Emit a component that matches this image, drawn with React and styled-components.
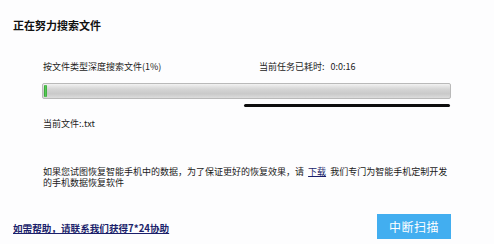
import React from "react";
import styled, { createGlobalStyle } from "styled-components";

const Global = createGlobalStyle`
  html, body { margin: 0; padding: 0; background: #fdfdfe; }
  body { font-family: "SimSun", "Noto Sans CJK SC", "Liberation Sans", sans-serif; color: #1a1a1a; }
`;

const Page = styled.div`
  width: 494px;
  height: 244px;
  box-sizing: border-box;
  display: flex;
  flex-direction: column;
  overflow: hidden;
`;

const Title = styled.h1`
  margin: 18px 0 0 13px;
  font-size: 11px;
  line-height: 14px;
  font-weight: 700;
  color: #111;
`;

const Body = styled.div`
  margin-left: 42px;
  width: 409px;
  display: flex;
  flex-direction: column;
`;

const InfoRow = styled.div`
  margin-top: 28px;
  display: flex;
  font-size: 9px;
  line-height: 14px;
  color: #222;
`;

const Label = styled.span`
  padding-left: 1px;
  width: 216px;
`;

const Elapsed = styled.span`
  display: flex;
  gap: 6px;
`;

const Track = styled.div`
  margin-top: 9px;
  height: 16px;
  box-sizing: border-box;
  border: 1px solid #b9b9b9;
  border-radius: 2px;
  background: linear-gradient(#f2f2f2 0%, #d6d6d6 35%, #c9c9c9 70%, #dcdcdc 100%);
  display: flex;
  padding: 1px;
`;

const Fill = styled.div`
  height: 100%;
  background: linear-gradient(90deg, #2f9a2f, #5fd35f 60%, #2f9a2f);
  border-radius: 1px;
`;

const Rule = styled.div`
  margin-top: 5px;
  margin-left: 202px;
  width: 206px;
  height: 3px;
  border-radius: 2px;
  background: #0d0d0d;
`;

const CurrentFile = styled.div`
  margin-top: 10px;
  font-size: 9px;
  line-height: 14px;
  color: #222;
  padding-left: 1px;
`;

const Notice = styled.p`
  margin: 35px 0 0 0;
  padding-left: 1px;
  font-size: 9px;
  line-height: 11px;
  color: #1a1a1a;
`;

const InlineLink = styled.a`
  color: #1b1f6b;
  text-decoration: underline;
`;

const Footer = styled.div`
  margin-top: 26px;
  padding: 0 43px 0 13px;
  display: flex;
  align-items: center;
  justify-content: space-between;
`;

const HelpLink = styled.a`
  font-size: 9.6px;
  font-weight: 700;
  line-height: 14px;
  color: #1b1f6b;
  text-decoration: underline;
  margin-top: 2px;
`;

const StopButton = styled.button`
  width: 74px;
  height: 25px;
  border: none;
  background: #42aef0;
  color: #fff;
  font-family: "Noto Sans CJK SC", sans-serif;
  font-size: 12px;
  letter-spacing: 0.5px;
  padding: 0;
`;

export default function App() {
  const progress = 1;
  return (
    <Page>
      <Global />
      <Title>正在努力搜索文件</Title>
      <Body>
        <InfoRow>
          <Label>按文件类型深度搜索文件({progress}%)</Label>
          <Elapsed>
            <span>当前任务已耗时:</span>
            <span>0:0:16</span>
          </Elapsed>
        </InfoRow>
        <Track>
          <Fill style={{ width: "3px" }} />
        </Track>
        <Rule />
        <CurrentFile>当前文件:.txt</CurrentFile>
        <Notice>
          如果您试图恢复智能手机中的数据，为了保证更好的恢复效果，请{"\u00a0\u00a0"}
          <InlineLink href="#">下载</InlineLink>
          {"\u00a0\u00a0"}我们专门为智能手机定制开发的手机数据恢复软件
        </Notice>
      </Body>
      <Footer>
        <HelpLink href="#">如需帮助，请联系我们获得7*24协助</HelpLink>
        <StopButton>中断扫描</StopButton>
      </Footer>
    </Page>
  );
}
